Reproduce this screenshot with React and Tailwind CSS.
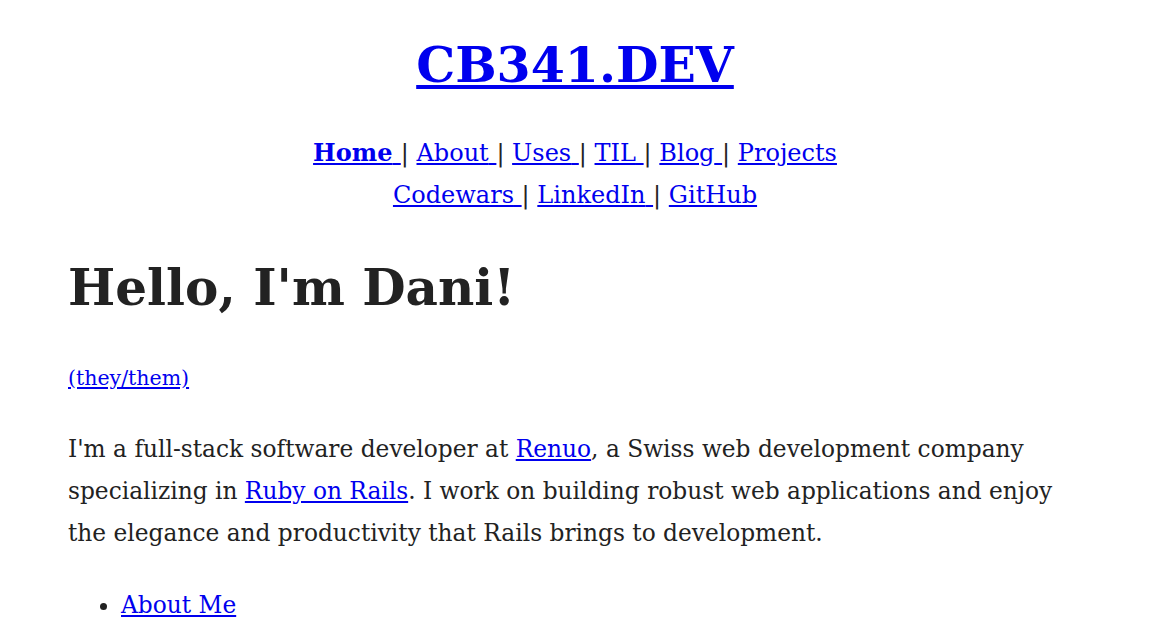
export default function App() {
  const linkCls = "text-[#0000ee] underline";
  const mainNav = ["Home", "About", "Uses", "TIL", "Blog", "Projects"];
  const extNav = ["Codewars", "LinkedIn", "GitHub"];

  return (
    <div className="min-h-screen bg-white text-[#222] font-['DejaVu_Serif',serif]">
      <header className="pt-[30px] text-center">
        <h1 className="text-[49px] font-bold leading-[70px]">
          <a href="#" className={linkCls}>CB341.DEV</a>
        </h1>
        <nav className="mt-[32px] text-[24px] leading-[42px]">
          <div>
            {mainNav.map((item, i) => (
              <span key={item}>
                <a href="#" className={`${linkCls} ${i === 0 ? "font-bold" : ""}`}>
                  {item}{i < mainNav.length - 1 ? " " : ""}
                </a>
                {i < mainNav.length - 1 && " | "}
              </span>
            ))}
          </div>
          <div>
            {extNav.map((item, i) => (
              <span key={item}>
                <a href="#" className={linkCls}>
                  {item}{i < extNav.length - 1 ? " " : ""}
                </a>
                {i < extNav.length - 1 && " | "}
              </span>
            ))}
          </div>
        </nav>
      </header>

      <main className="mx-[68px]">
        <h2 className="mt-[37px] text-[50px] font-bold leading-[70px]">Hello, I'm Dani!</h2>
        <p className="mt-[40px] text-[20.5px]">
          <a href="#" className={linkCls}>(they/them)</a>
        </p>
        <p className="mt-[34px] text-[23.3px] leading-[42px]">
          I'm a full-stack software developer at <a href="#" className={linkCls}>Renuo</a>, a Swiss web development company specializing in <a href="#" className={linkCls}>Ruby on Rails</a>. I work on building robust web applications and enjoy the elegance and productivity that Rails brings to development.
        </p>
        <ul className="mt-[30px] list-disc pl-[53px] text-[23.3px] leading-[42px]">
          <li><a href="#" className={linkCls}>About Me</a></li>
          <li><a href="#" className={linkCls}>Uses</a></li>
        </ul>
      </main>
    </div>
  );
}
